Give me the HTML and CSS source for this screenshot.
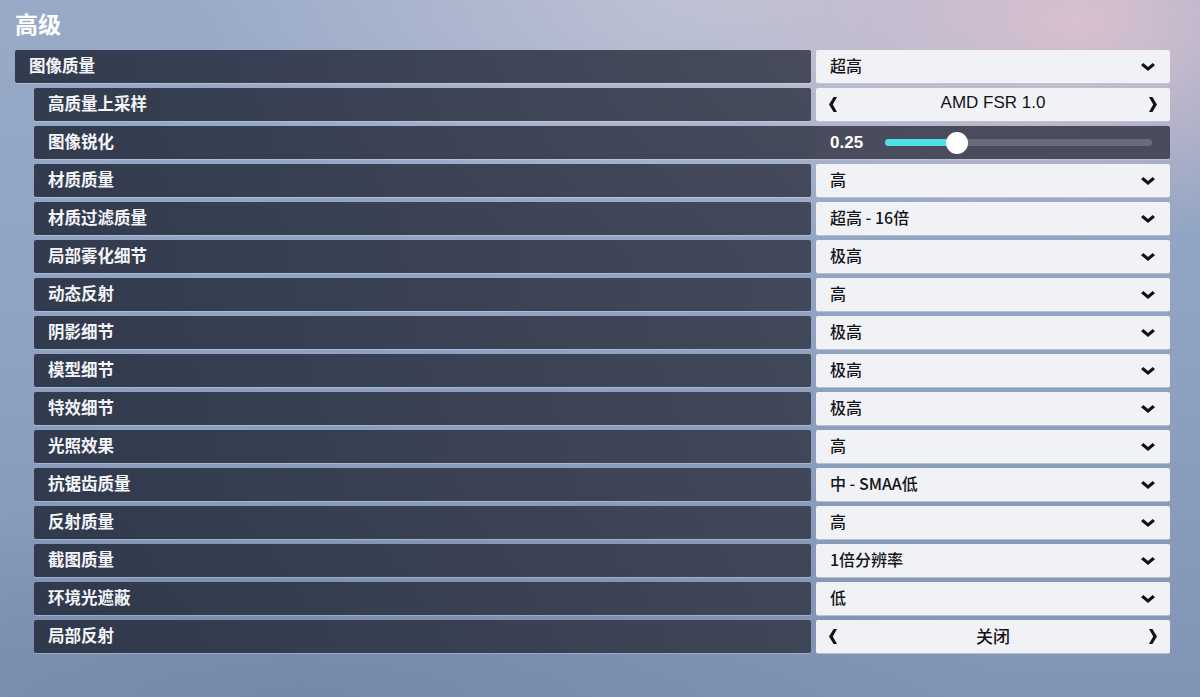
FILE: index.html
```html
<!DOCTYPE html>
<html lang="zh">
<head>
<meta charset="utf-8">
<link rel="stylesheet" href="styles.css">
</head>
<body>
<div class="page">
  <h1 class="title">高级</h1>
  <div class="list">
    <div class="row">
      <div class="label">图像质量</div>
      <div class="value dropdown"><span>超高</span><svg class="chev" viewBox="0 0 14 8"><path d="M0 2.3 L2.3 0 L7 4 L11.7 0 L14 2.3 L7 8 Z"/></svg></div>
    </div>
    <div class="row sub">
      <div class="label">高质量上采样</div>
      <div class="value cycler"><svg class="arr" viewBox="0 0 8 15"><path d="M4.6 0 L8 0 L3.8 7.5 L8 15 L4.6 15 L0 7.5 Z"/></svg><span>AMD FSR 1.0</span><svg class="arr" viewBox="0 0 8 15"><path d="M3.4 0 L0 0 L4.2 7.5 L0 15 L3.4 15 L8 7.5 Z"/></svg></div>
    </div>
    <div class="row sub slider-row">
      <div class="label">图像锐化</div>
      <div class="value slider"><span class="num">0.25</span><div class="track"><div class="fill" style="width:27%"></div><div class="thumb" style="left:27%"></div></div></div>
    </div>
    <div class="row sub">
      <div class="label">材质质量</div>
      <div class="value dropdown"><span>高</span><svg class="chev" viewBox="0 0 14 8"><path d="M0 2.3 L2.3 0 L7 4 L11.7 0 L14 2.3 L7 8 Z"/></svg></div>
    </div>
    <div class="row sub">
      <div class="label">材质过滤质量</div>
      <div class="value dropdown"><span>超高 - 16倍</span><svg class="chev" viewBox="0 0 14 8"><path d="M0 2.3 L2.3 0 L7 4 L11.7 0 L14 2.3 L7 8 Z"/></svg></div>
    </div>
    <div class="row sub">
      <div class="label">局部雾化细节</div>
      <div class="value dropdown"><span>极高</span><svg class="chev" viewBox="0 0 14 8"><path d="M0 2.3 L2.3 0 L7 4 L11.7 0 L14 2.3 L7 8 Z"/></svg></div>
    </div>
    <div class="row sub">
      <div class="label">动态反射</div>
      <div class="value dropdown"><span>高</span><svg class="chev" viewBox="0 0 14 8"><path d="M0 2.3 L2.3 0 L7 4 L11.7 0 L14 2.3 L7 8 Z"/></svg></div>
    </div>
    <div class="row sub">
      <div class="label">阴影细节</div>
      <div class="value dropdown"><span>极高</span><svg class="chev" viewBox="0 0 14 8"><path d="M0 2.3 L2.3 0 L7 4 L11.7 0 L14 2.3 L7 8 Z"/></svg></div>
    </div>
    <div class="row sub">
      <div class="label">模型细节</div>
      <div class="value dropdown"><span>极高</span><svg class="chev" viewBox="0 0 14 8"><path d="M0 2.3 L2.3 0 L7 4 L11.7 0 L14 2.3 L7 8 Z"/></svg></div>
    </div>
    <div class="row sub">
      <div class="label">特效细节</div>
      <div class="value dropdown"><span>极高</span><svg class="chev" viewBox="0 0 14 8"><path d="M0 2.3 L2.3 0 L7 4 L11.7 0 L14 2.3 L7 8 Z"/></svg></div>
    </div>
    <div class="row sub">
      <div class="label">光照效果</div>
      <div class="value dropdown"><span>高</span><svg class="chev" viewBox="0 0 14 8"><path d="M0 2.3 L2.3 0 L7 4 L11.7 0 L14 2.3 L7 8 Z"/></svg></div>
    </div>
    <div class="row sub">
      <div class="label">抗锯齿质量</div>
      <div class="value dropdown"><span>中 - SMAA低</span><svg class="chev" viewBox="0 0 14 8"><path d="M0 2.3 L2.3 0 L7 4 L11.7 0 L14 2.3 L7 8 Z"/></svg></div>
    </div>
    <div class="row sub">
      <div class="label">反射质量</div>
      <div class="value dropdown"><span>高</span><svg class="chev" viewBox="0 0 14 8"><path d="M0 2.3 L2.3 0 L7 4 L11.7 0 L14 2.3 L7 8 Z"/></svg></div>
    </div>
    <div class="row sub">
      <div class="label">截图质量</div>
      <div class="value dropdown"><span>1倍分辨率</span><svg class="chev" viewBox="0 0 14 8"><path d="M0 2.3 L2.3 0 L7 4 L11.7 0 L14 2.3 L7 8 Z"/></svg></div>
    </div>
    <div class="row sub">
      <div class="label">环境光遮蔽</div>
      <div class="value dropdown"><span>低</span><svg class="chev" viewBox="0 0 14 8"><path d="M0 2.3 L2.3 0 L7 4 L11.7 0 L14 2.3 L7 8 Z"/></svg></div>
    </div>
    <div class="row sub">
      <div class="label">局部反射</div>
      <div class="value cycler"><svg class="arr" viewBox="0 0 8 15"><path d="M4.6 0 L8 0 L3.8 7.5 L8 15 L4.6 15 L0 7.5 Z"/></svg><span>关闭</span><svg class="arr" viewBox="0 0 8 15"><path d="M3.4 0 L0 0 L4.2 7.5 L0 15 L3.4 15 L8 7.5 Z"/></svg></div>
    </div>
  </div>
</div>
</body>
</html>
```

FILE: styles.css
```css
* { box-sizing: border-box; }
html, body { margin: 0; height: 100%; }
body {
  width: 1200px;
  height: 697px;
  overflow: hidden;
  font-family: "Noto Sans CJK SC", "Noto Sans", sans-serif;
  background:
    radial-gradient(ellipse 380px 220px at 1080px 20px, rgba(222,194,208,0.9), rgba(222,194,208,0) 100%),
    radial-gradient(ellipse 520px 260px at 700px 0px, rgba(205,202,216,0.75), rgba(205,202,216,0) 100%),
    radial-gradient(ellipse 700px 200px at 300px 697px, rgba(110,128,162,0.6), rgba(110,128,162,0) 100%),
    linear-gradient(180deg, #98aac8 0%, #90a3c2 45%, #8194b5 100%);
}
.page {
  padding: 0 30px 0 15px;
}
.title {
  margin: 0;
  height: 50px;
  padding-top: 8px;
  font-size: 23px;
  line-height: 30px;
  font-weight: 700;
  color: #ffffff;
}
.list {
  display: flex;
  flex-direction: column;
  gap: 5px;
}
.row {
  display: grid;
  grid-template-columns: 1fr 354px;
  gap: 5px;
  height: 33px;
}
.row.sub { margin-left: 19px; }
.label {
  background: linear-gradient(90deg, rgba(40,47,66,0.9) 0%, rgba(52,57,72,0.86) 100%);
  border-radius: 2px;
  box-shadow: 0 1px 0 rgba(255,255,255,0.25);
  color: #f4f5f8;
  font-weight: 700;
  font-size: 16.5px;
  line-height: 30px;
  padding-left: 14px;
  white-space: nowrap;
}
.value {
  border-radius: 2px;
  display: flex;
  align-items: center;
  font-size: 16px;
  font-weight: 500;
  color: #111318;
}
.dropdown, .cycler {
  background: #f1f2f5;
  box-shadow: 0 1px 0 rgba(190,195,210,0.9);
  padding-bottom: 3px;
}
.dropdown {
  justify-content: space-between;
  padding-left: 14px;
  padding-right: 15px;
}
.chev {
  width: 14px;
  height: 8px;
  fill: #111318;
  margin-top: 3px;
}
.cycler {
  justify-content: space-between;
  padding-left: 13px;
  padding-right: 13px;
}
.cycler span {
  font-family: "Liberation Sans", "Noto Sans CJK SC", sans-serif;
  font-size: 17px;
  font-weight: 500;
}
.arr {
  width: 8px;
  height: 15px;
  fill: #111318;
  margin-top: 3px;
}
.slider-row { gap: 0; }
.slider-row .label { border-radius: 2px 0 0 2px; }
.slider {
  background: rgba(68,70,86,0.95);
  border-radius: 0 2px 2px 0;
  padding-left: 14px;
  padding-right: 18px;
  box-shadow: 0 1px 0 rgba(255,255,255,0.2);
}
.num {
  color: #ffffff;
  font-family: "Liberation Sans", "Noto Sans", sans-serif;
  font-weight: 700;
  width: 55px;
  font-size: 17px;
}
.track {
  position: relative;
  flex: 1;
  height: 7px;
  border-radius: 4px;
  background: #6b6c7a;
}
.fill {
  height: 100%;
  border-radius: 4px;
  background: #4fe2e4;
}
.thumb {
  position: absolute;
  top: 50%;
  width: 22px;
  height: 22px;
  margin: -11px 0 0 -11px;
  border-radius: 50%;
  background: #ffffff;
}
```
